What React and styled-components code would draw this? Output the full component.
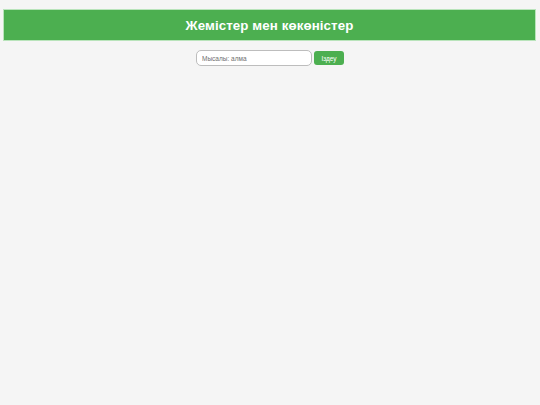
import React from "react";
import styled, { createGlobalStyle } from "styled-components";

const Global = createGlobalStyle`
  html, body { margin: 0; padding: 0; background: #f5f5f5; }
  body { font-family: "Liberation Sans", Arial, sans-serif; }
`;

const Page = styled.div`
  min-height: 405px;
  background: #f5f5f5;
  padding-top: 9px;
  box-sizing: border-box;
`;

const Header = styled.header`
  margin: 0 4px 0 3px;
  height: 32px;
  box-sizing: border-box;
  background: #4caf50;
  border: 1px solid #b9e4bb;
  display: flex;
  align-items: center;
  justify-content: center;
`;

const Title = styled.h1`
  margin: 0;
  color: #fff;
  font-size: 13.3px;
  font-weight: 700;
  letter-spacing: 0.1px;
`;

const Form = styled.form`
  display: flex;
  justify-content: center;
  align-items: center;
  gap: 2px;
  margin-top: 9px;
`;

const Input = styled.input`
  width: 116px;
  height: 16px;
  box-sizing: border-box;
  border: 1px solid #bdbdbd;
  border-radius: 5px;
  background: #fff;
  padding: 0 5px;
  font-family: "Liberation Sans", Arial, sans-serif;
  font-size: 6.5px;
  outline: none;
  &::placeholder { color: #6f6f6f; }
`;

const Button = styled.button`
  width: 30px;
  height: 14px;
  box-sizing: border-box;
  border: none;
  border-radius: 3px;
  background: #4caf50;
  color: #fff;
  font-family: "Liberation Sans", Arial, sans-serif;
  font-size: 6.5px;
  padding: 0;
  cursor: pointer;
`;

export default function App() {
  return (
    <>
      <Global />
      <Page>
        <Header>
          <Title>Жемістер мен көкөністер</Title>
        </Header>
        <Form onSubmit={(e) => e.preventDefault()}>
          <Input placeholder="Мысалы: алма" />
          <Button type="submit">Іздеу</Button>
        </Form>
      </Page>
    </>
  );
}
